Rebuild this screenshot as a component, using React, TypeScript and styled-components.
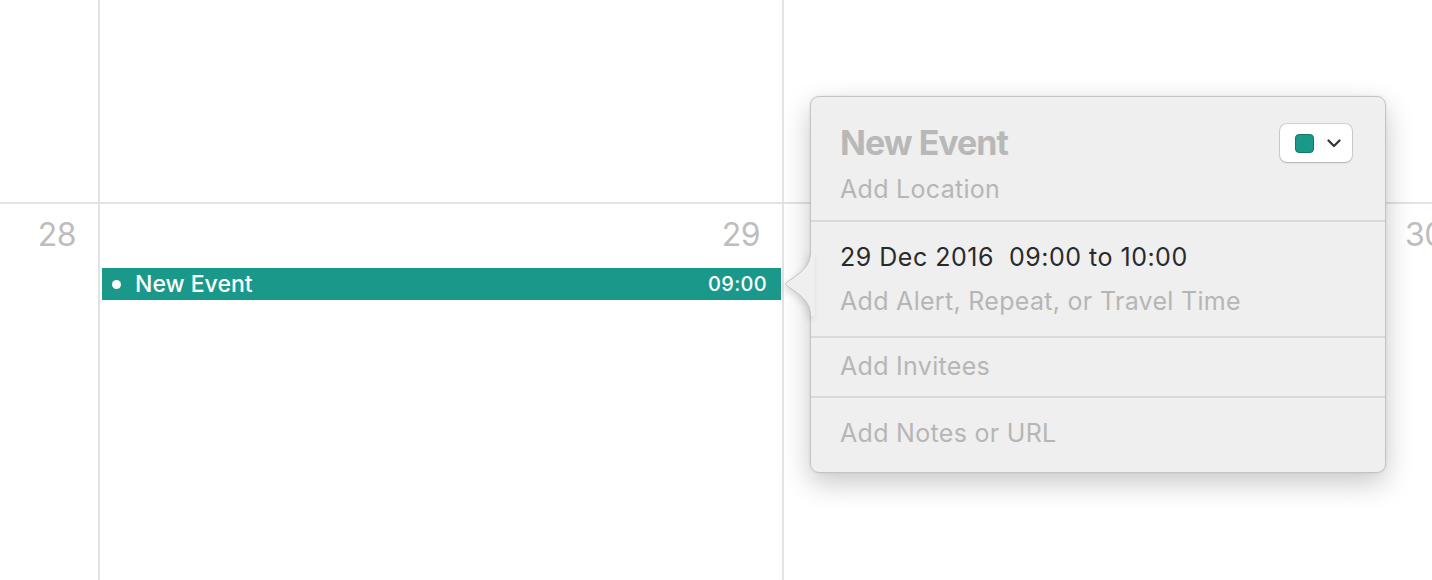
import React from "react";
import styled, { createGlobalStyle } from "styled-components";

const Global = createGlobalStyle`
  html, body { margin: 0; padding: 0; background: #ffffff; overflow: hidden; }
  body { font-family: Inter, "Liberation Sans", Arial, sans-serif; -webkit-font-smoothing: antialiased; }
`;

const Calendar = styled.div`
  position: relative;
  width: 1432px;
  height: 580px;
  overflow: hidden;
  display: flex;
  flex-direction: column;
  background: #ffffff;
`;

const Row = styled.div<{ $h?: number; $line?: boolean }>`
  display: flex;
  box-sizing: border-box;
  flex: ${(p) => (p.$h ? `0 0 ${p.$h}px` : "1 1 auto")};
  border-bottom: ${(p) => (p.$line ? "2px solid #e3e3e3" : "none")};
`;

const Cell = styled.div<{ $w: number }>`
  flex: 0 0 ${(p) => p.$w}px;
  box-sizing: border-box;
  border-right: 2px solid #e3e3e3;
  display: flex;
  flex-direction: column;
`;

const DayNum = styled.div`
  font-size: 32px;
  line-height: 38px;
  color: #bdbdbd;
  text-align: right;
  letter-spacing: -0.5px;
  padding: 12px 22px 0 0;
`;

const EventBar = styled.div`
  margin: 14px 1px 0 2px;
  height: 32px;
  background: #1a998b;
  color: #ffffff;
  display: flex;
  align-items: center;
  padding: 0 14px 0 10px;
  font-size: 23px;
  font-weight: 500;
`;

const Dot = styled.span`
  flex: 0 0 9px;
  height: 9px;
  border-radius: 50%;
  background: #ffffff;
  margin-right: 14px;
`;

const BarTitle = styled.span`
  flex: 1;
`;

const BarTime = styled.span`
  font-size: 20px;
  letter-spacing: 0.3px;
`;

const Popover = styled.div`
  position: absolute;
  left: 810px;
  top: 96px;
  width: 576px;
  height: 377px;
  box-sizing: border-box;
  background: #efefef;
  border: 1px solid #c4c4c4;
  border-radius: 9px;
  box-shadow: 0 10px 28px rgba(0, 0, 0, 0.22), 0 0 3px rgba(0, 0, 0, 0.08);
  display: flex;
  flex-direction: column;
`;

const Arrow = styled.svg`
  position: absolute;
  left: -26px;
  top: 155px;
  width: 30px;
  height: 64px;
  overflow: visible;
  filter: drop-shadow(-2px 3px 3px rgba(0, 0, 0, 0.12));
`;

const Section = styled.div<{ $h: number; $pt: number; $last?: boolean }>`
  flex: 0 0 ${(p) => p.$h}px;
  box-sizing: border-box;
  border-bottom: ${(p) => (p.$last ? "none" : "2px solid #d9d9d9")};
  padding: ${(p) => p.$pt}px 32px 0 29px;
  display: flex;
  flex-direction: column;
`;

const HeaderRow = styled.div`
  display: flex;
  justify-content: space-between;
  align-items: center;
  height: 40px;
`;

const Title = styled.div`
  font-size: 34px;
  line-height: 40px;
  font-weight: 700;
  letter-spacing: -1px;
  color: #b8b8b8;
`;

const Muted = styled.div<{ $mt?: number }>`
  font-size: 25px;
  line-height: 30px;
  color: #b6b6b6;
  letter-spacing: 0.3px;
  margin-top: ${(p) => p.$mt ?? 0}px;
`;

const Strong = styled.div`
  font-size: 25px;
  line-height: 30px;
  color: #2a2a2a;
  letter-spacing: 0.5px;
  white-space: pre;
`;

const ColorButton = styled.div`
  width: 72px;
  height: 38px;
  box-sizing: border-box;
  background: #ffffff;
  border-radius: 7px;
  box-shadow: 0 0 0 1px rgba(0, 0, 0, 0.12), 0 1px 2px rgba(0, 0, 0, 0.15);
  display: flex;
  align-items: center;
  padding-left: 15px;
  gap: 13px;
  margin-right: 1px;
`;

const Swatch = styled.span`
  width: 19px;
  height: 19px;
  box-sizing: border-box;
  border-radius: 4px;
  background: #1a998b;
  border: 1.5px solid #13766b;
`;

export default function App() {
  return (
    <>
      <Global />
      <Calendar>
        <Row $h={204} $line>
          <Cell $w={100} />
          <Cell $w={684} />
          <Cell $w={684} />
        </Row>
        <Row>
          <Cell $w={100}>
            <DayNum>28</DayNum>
          </Cell>
          <Cell $w={684}>
            <DayNum>29</DayNum>
            <EventBar>
              <Dot />
              <BarTitle>New Event</BarTitle>
              <BarTime>09:00</BarTime>
            </EventBar>
          </Cell>
          <Cell $w={684}>
            <DayNum>30</DayNum>
          </Cell>
        </Row>
        <Popover>
          <Arrow viewBox="0 0 30 64">
            <path
              d="M25.5 0 C25.5 14 16 20 8 26 C2 30 0.5 31 0.5 32 C0.5 33 2 34 8 38 C16 44 25.5 50 25.5 64 L30 64 L30 0 Z"
              fill="#efefef"
            />
            <path
              d="M25.5 0 C25.5 14 16 20 8 26 C2 30 0.5 31 0.5 32 C0.5 33 2 34 8 38 C16 44 25.5 50 25.5 64"
              fill="none"
              stroke="#c0c0c0"
              strokeWidth="1"
            />
          </Arrow>
          <Section $h={125} $pt={26}>
            <HeaderRow>
              <Title>New Event</Title>
              <ColorButton>
                <Swatch />
                <svg width="14" height="9" viewBox="0 0 14 9">
                  <path d="M1.5 1.5 L7 7 L12.5 1.5" fill="none" stroke="#333" strokeWidth="2.2" strokeLinecap="round" strokeLinejoin="round" />
                </svg>
              </ColorButton>
            </HeaderRow>
            <Muted $mt={11}>Add Location</Muted>
          </Section>
          <Section $h={116} $pt={20}>
            <Strong>{"29 Dec 2016  09:00 to 10:00"}</Strong>
            <Muted $mt={14}>Add Alert, Repeat, or Travel Time</Muted>
          </Section>
          <Section $h={60} $pt={13}>
            <Muted>Add Invitees</Muted>
          </Section>
          <Section $h={74} $pt={20} $last>
            <Muted>Add Notes or URL</Muted>
          </Section>
        </Popover>
      </Calendar>
    </>
  );
}
